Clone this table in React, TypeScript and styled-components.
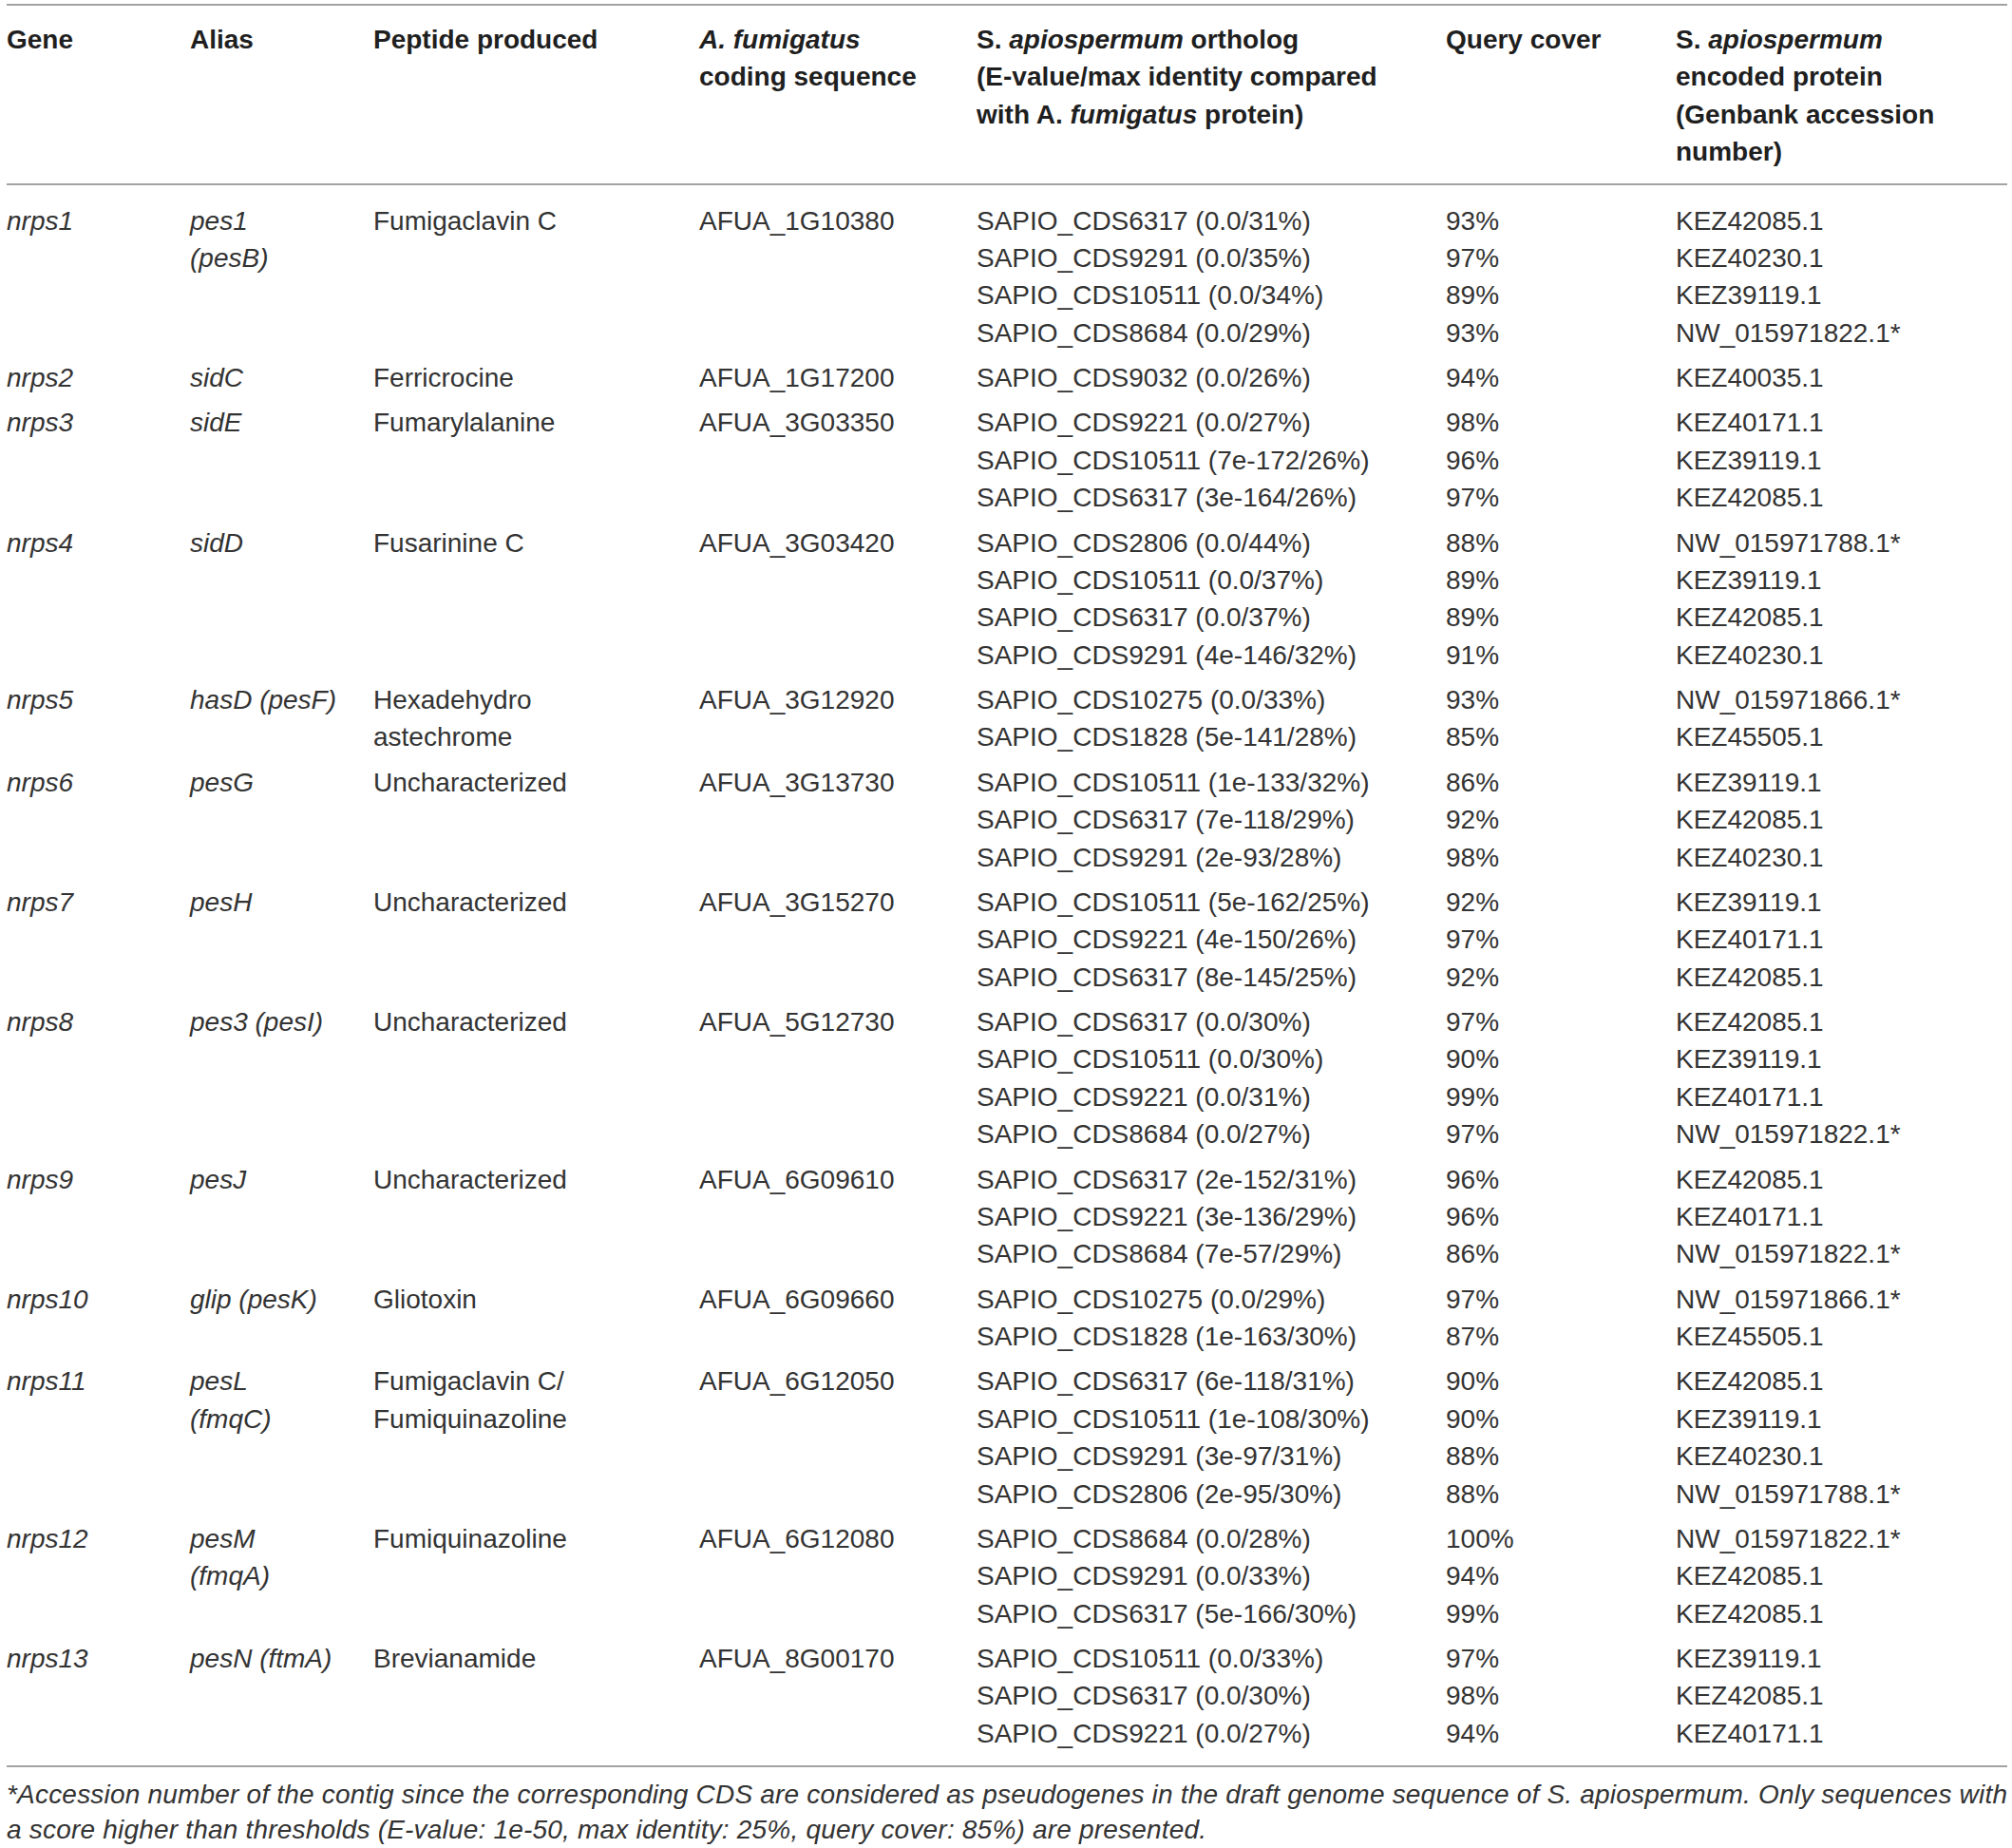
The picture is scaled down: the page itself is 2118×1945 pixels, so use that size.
import React from "react";
import styled, { createGlobalStyle } from "styled-components";

const GlobalStyle = createGlobalStyle`
  html, body {
    margin: 0;
    padding: 0;
    background: #ffffff;
  }
  body {
    font-family: "Liberation Sans", Arial, sans-serif;
    color: #333333;
  }
`;

type Hit = { cds: string; cover: string; acc: string };
type GeneRow = {
  gene: string;
  alias: string[];
  peptide: string[];
  afum: string;
  hits: Hit[];
};

const h = (cds: string, cover: string, acc: string): Hit => ({ cds, cover, acc });

const rows: GeneRow[] = [
  {
    gene: "nrps1",
    alias: ["pes1", "(pesB)"],
    peptide: ["Fumigaclavin C"],
    afum: "AFUA_1G10380",
    hits: [
      h("SAPIO_CDS6317 (0.0/31%)", "93%", "KEZ42085.1"),
      h("SAPIO_CDS9291 (0.0/35%)", "97%", "KEZ40230.1"),
      h("SAPIO_CDS10511 (0.0/34%)", "89%", "KEZ39119.1"),
      h("SAPIO_CDS8684 (0.0/29%)", "93%", "NW_015971822.1*"),
    ],
  },
  {
    gene: "nrps2",
    alias: ["sidC"],
    peptide: ["Ferricrocine"],
    afum: "AFUA_1G17200",
    hits: [h("SAPIO_CDS9032 (0.0/26%)", "94%", "KEZ40035.1")],
  },
  {
    gene: "nrps3",
    alias: ["sidE"],
    peptide: ["Fumarylalanine"],
    afum: "AFUA_3G03350",
    hits: [
      h("SAPIO_CDS9221 (0.0/27%)", "98%", "KEZ40171.1"),
      h("SAPIO_CDS10511 (7e-172/26%)", "96%", "KEZ39119.1"),
      h("SAPIO_CDS6317 (3e-164/26%)", "97%", "KEZ42085.1"),
    ],
  },
  {
    gene: "nrps4",
    alias: ["sidD"],
    peptide: ["Fusarinine C"],
    afum: "AFUA_3G03420",
    hits: [
      h("SAPIO_CDS2806 (0.0/44%)", "88%", "NW_015971788.1*"),
      h("SAPIO_CDS10511 (0.0/37%)", "89%", "KEZ39119.1"),
      h("SAPIO_CDS6317 (0.0/37%)", "89%", "KEZ42085.1"),
      h("SAPIO_CDS9291 (4e-146/32%)", "91%", "KEZ40230.1"),
    ],
  },
  {
    gene: "nrps5",
    alias: ["hasD (pesF)"],
    peptide: ["Hexadehydro", "astechrome"],
    afum: "AFUA_3G12920",
    hits: [
      h("SAPIO_CDS10275 (0.0/33%)", "93%", "NW_015971866.1*"),
      h("SAPIO_CDS1828 (5e-141/28%)", "85%", "KEZ45505.1"),
    ],
  },
  {
    gene: "nrps6",
    alias: ["pesG"],
    peptide: ["Uncharacterized"],
    afum: "AFUA_3G13730",
    hits: [
      h("SAPIO_CDS10511 (1e-133/32%)", "86%", "KEZ39119.1"),
      h("SAPIO_CDS6317 (7e-118/29%)", "92%", "KEZ42085.1"),
      h("SAPIO_CDS9291 (2e-93/28%)", "98%", "KEZ40230.1"),
    ],
  },
  {
    gene: "nrps7",
    alias: ["pesH"],
    peptide: ["Uncharacterized"],
    afum: "AFUA_3G15270",
    hits: [
      h("SAPIO_CDS10511 (5e-162/25%)", "92%", "KEZ39119.1"),
      h("SAPIO_CDS9221 (4e-150/26%)", "97%", "KEZ40171.1"),
      h("SAPIO_CDS6317 (8e-145/25%)", "92%", "KEZ42085.1"),
    ],
  },
  {
    gene: "nrps8",
    alias: ["pes3 (pesI)"],
    peptide: ["Uncharacterized"],
    afum: "AFUA_5G12730",
    hits: [
      h("SAPIO_CDS6317 (0.0/30%)", "97%", "KEZ42085.1"),
      h("SAPIO_CDS10511 (0.0/30%)", "90%", "KEZ39119.1"),
      h("SAPIO_CDS9221 (0.0/31%)", "99%", "KEZ40171.1"),
      h("SAPIO_CDS8684 (0.0/27%)", "97%", "NW_015971822.1*"),
    ],
  },
  {
    gene: "nrps9",
    alias: ["pesJ"],
    peptide: ["Uncharacterized"],
    afum: "AFUA_6G09610",
    hits: [
      h("SAPIO_CDS6317 (2e-152/31%)", "96%", "KEZ42085.1"),
      h("SAPIO_CDS9221 (3e-136/29%)", "96%", "KEZ40171.1"),
      h("SAPIO_CDS8684 (7e-57/29%)", "86%", "NW_015971822.1*"),
    ],
  },
  {
    gene: "nrps10",
    alias: ["glip (pesK)"],
    peptide: ["Gliotoxin"],
    afum: "AFUA_6G09660",
    hits: [
      h("SAPIO_CDS10275 (0.0/29%)", "97%", "NW_015971866.1*"),
      h("SAPIO_CDS1828 (1e-163/30%)", "87%", "KEZ45505.1"),
    ],
  },
  {
    gene: "nrps11",
    alias: ["pesL", "(fmqC)"],
    peptide: ["Fumigaclavin C/", "Fumiquinazoline"],
    afum: "AFUA_6G12050",
    hits: [
      h("SAPIO_CDS6317 (6e-118/31%)", "90%", "KEZ42085.1"),
      h("SAPIO_CDS10511 (1e-108/30%)", "90%", "KEZ39119.1"),
      h("SAPIO_CDS9291 (3e-97/31%)", "88%", "KEZ40230.1"),
      h("SAPIO_CDS2806 (2e-95/30%)", "88%", "NW_015971788.1*"),
    ],
  },
  {
    gene: "nrps12",
    alias: ["pesM", "(fmqA)"],
    peptide: ["Fumiquinazoline"],
    afum: "AFUA_6G12080",
    hits: [
      h("SAPIO_CDS8684 (0.0/28%)", "100%", "NW_015971822.1*"),
      h("SAPIO_CDS9291 (0.0/33%)", "94%", "KEZ42085.1"),
      h("SAPIO_CDS6317 (5e-166/30%)", "99%", "KEZ42085.1"),
    ],
  },
  {
    gene: "nrps13",
    alias: ["pesN (ftmA)"],
    peptide: ["Brevianamide"],
    afum: "AFUA_8G00170",
    hits: [
      h("SAPIO_CDS10511 (0.0/33%)", "97%", "KEZ39119.1"),
      h("SAPIO_CDS6317 (0.0/30%)", "98%", "KEZ42085.1"),
      h("SAPIO_CDS9221 (0.0/27%)", "94%", "KEZ40171.1"),
    ],
  },
];

const COLS = "193px 193px 343px 292px 494px 242px 1fr";

const Page = styled.div`
  width: 2106px;
  margin-left: 7px;
  padding-top: 4px;
`;

const Table = styled.div`
  border-top: 2px solid #a2a2a2;
  border-bottom: 2px solid #a2a2a2;
`;

const HeaderRow = styled.div`
  display: grid;
  grid-template-columns: ${COLS};
  padding: 16px 0 13px;
  border-bottom: 2px solid #a2a2a2;
`;

const HeadCell = styled.div`
  font-size: 28px;
  line-height: 39.4px;
  font-weight: 700;
  color: #1f1f1f;
  white-space: nowrap;
`;

const Body = styled.div`
  padding: 14px 0 10px;
`;

const Row = styled.div`
  display: grid;
  grid-template-columns: ${COLS};
  padding: 4px 0 3.9px;
`;

const Cell = styled.div<{ $italic?: boolean }>`
  font-size: 28px;
  line-height: 39.4px;
  font-style: ${(p) => (p.$italic ? "italic" : "normal")};
  white-space: nowrap;
  color: #333333;
`;

const Line = styled.div``;

const Footnote = styled.p`
  margin: 0;
  padding-top: 11px;
  font-size: 28px;
  line-height: 36.5px;
  font-style: italic;
  letter-spacing: 0.2px;
  color: #333333;
  white-space: nowrap;
`;

function Lines({ items }: { items: string[] }) {
  return (
    <>
      {items.map((t, i) => (
        <Line key={i}>{t}</Line>
      ))}
    </>
  );
}

export default function App() {
  return (
    <Page>
      <GlobalStyle />
      <Table>
        <HeaderRow>
          <HeadCell>Gene</HeadCell>
          <HeadCell>Alias</HeadCell>
          <HeadCell>Peptide produced</HeadCell>
          <HeadCell>
            <Line>
              <i>A. fumigatus</i>
            </Line>
            <Line>coding sequence</Line>
          </HeadCell>
          <HeadCell>
            <Line>
              S. <i>apiospermum</i> ortholog
            </Line>
            <Line>(E-value/max identity compared</Line>
            <Line>
              with A. <i>fumigatus</i> protein)
            </Line>
          </HeadCell>
          <HeadCell>Query cover</HeadCell>
          <HeadCell>
            <Line>
              S. <i>apiospermum</i>
            </Line>
            <Line>encoded protein</Line>
            <Line>(Genbank accession</Line>
            <Line>number)</Line>
          </HeadCell>
        </HeaderRow>
        <Body>
          {rows.map((r) => (
            <Row key={r.gene}>
              <Cell $italic>{r.gene}</Cell>
              <Cell $italic>
                <Lines items={r.alias} />
              </Cell>
              <Cell>
                <Lines items={r.peptide} />
              </Cell>
              <Cell>{r.afum}</Cell>
              <Cell>
                <Lines items={r.hits.map((x) => x.cds)} />
              </Cell>
              <Cell>
                <Lines items={r.hits.map((x) => x.cover)} />
              </Cell>
              <Cell>
                <Lines items={r.hits.map((x) => x.acc)} />
              </Cell>
            </Row>
          ))}
        </Body>
      </Table>
      <Footnote>
        *Accession number of the contig since the corresponding CDS are considered as pseudogenes in the draft genome
        sequence of S. apiospermum. Only sequences with
        <br />a score higher than thresholds (E-value: 1e-50, max identity: 25%, query cover: 85%) are presented.
      </Footnote>
    </Page>
  );
}
